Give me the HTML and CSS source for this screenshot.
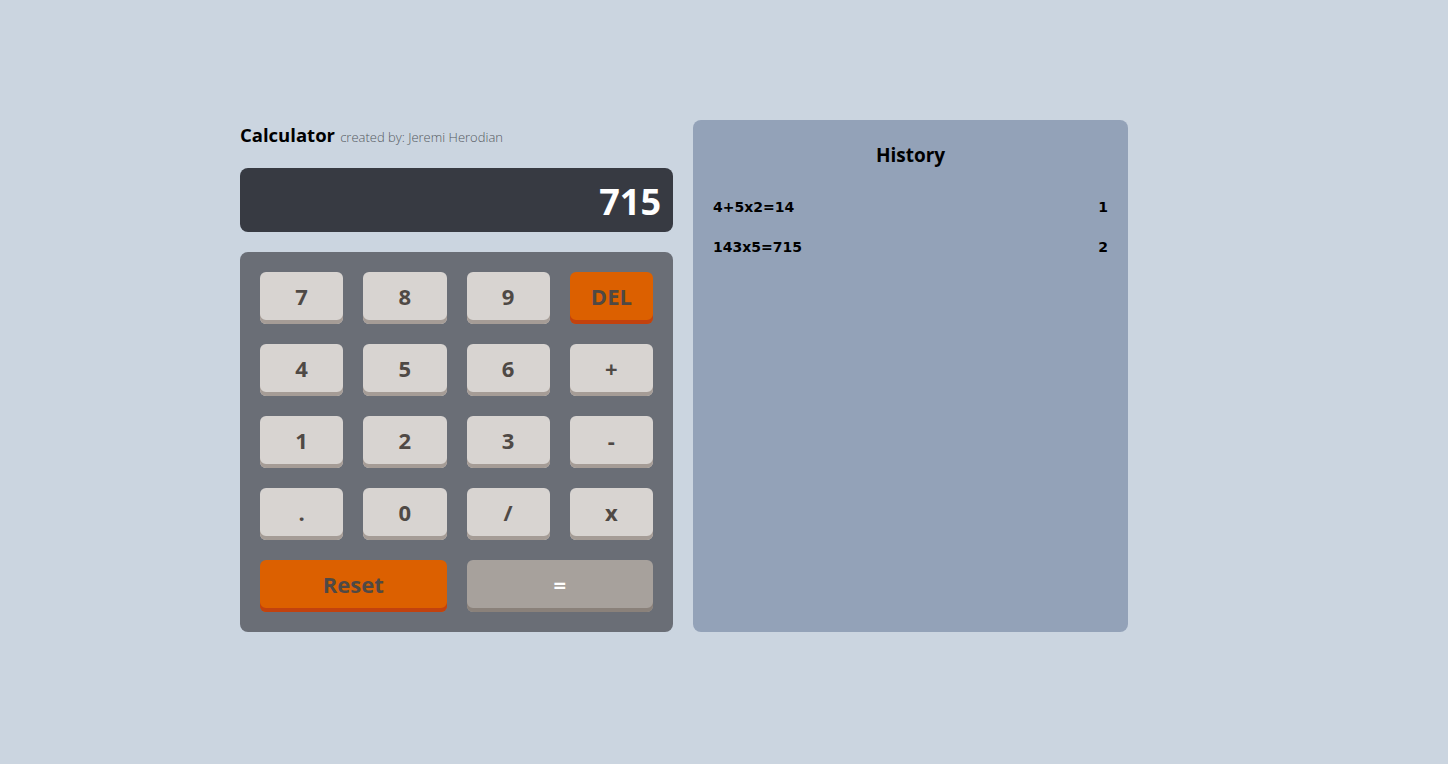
FILE: index.html
```html
<!DOCTYPE html>
<html lang="en">
<head>
<meta charset="utf-8">
<title>Calculator</title>
<link rel="stylesheet" href="styles.css">
</head>
<body>
<div class="app">
  <div class="calc">
    <div class="title"><span class="name">Calculator</span> <span class="by">created by: Jeremi Herodian</span></div>
    <div class="display">715</div>
    <div class="keypad">
      <button class="key">7</button>
      <button class="key">8</button>
      <button class="key">9</button>
      <button class="key orange">DEL</button>
      <button class="key">4</button>
      <button class="key">5</button>
      <button class="key">6</button>
      <button class="key">+</button>
      <button class="key">1</button>
      <button class="key">2</button>
      <button class="key">3</button>
      <button class="key">-</button>
      <button class="key">.</button>
      <button class="key">0</button>
      <button class="key">/</button>
      <button class="key">x</button>
      <button class="key orange wide">Reset</button>
      <button class="key equals wide">=</button>
    </div>
  </div>
  <div class="history">
    <h2 class="history-title">History</h2>
    <ul class="history-list">
      <li class="history-item"><span>4+5x2=14</span><span>1</span></li>
      <li class="history-item"><span>143x5=715</span><span>2</span></li>
    </ul>
  </div>
</div>
</body>
</html>
```
FILE: styles.css
```css
* { box-sizing: border-box; }
html, body { margin: 0; padding: 0; }
body {
  background: #cbd5e0;
  font-family: "Open Sans", "Noto Sans", sans-serif;
  width: 1448px;
  height: 764px;
  overflow: hidden;
}
.app {
  display: flex;
  gap: 20px;
  padding: 120px 0 0 240px;
}
.calc {
  width: 433px;
  display: flex;
  flex-direction: column;
}
.title {
  height: 48px;
  padding-top: 2px;
  line-height: 26px;
  color: #000;
}
.name {
  font-size: 18.5px;
  font-weight: 700;
}
.by {
  font-size: 13px;
  font-weight: 300;
  color: #555a60;
  margin-left: 1px;
}
.display {
  height: 64px;
  background: #373a42;
  border-radius: 8px;
  color: #fff;
  font-size: 36px;
  font-weight: 700;
  text-align: right;
  line-height: 68px;
  padding-right: 12px;
}
.keypad {
  margin-top: 20px;
  height: 380px;
  background: #6a6e76;
  border-radius: 8px;
  padding: 20px;
  display: grid;
  grid-template-columns: repeat(4, 1fr);
  grid-auto-rows: 52px;
  column-gap: 20px;
  row-gap: 20px;
}
.key {
  border: none;
  margin: 0;
  padding: 0 0 4px;
  height: 52px;
  border-radius: 6px;
  background: #d8d4d1;
  box-shadow: inset 0 -4px 0 #a59c96;
  color: #4f4945;
  font-family: "Open Sans", "Noto Sans", sans-serif;
  font-size: 22px;
  font-weight: 700;
  cursor: pointer;
}
.key.orange {
  background: #dc6000;
  box-shadow: inset 0 -4px 0 #c2420e;
}
.key.wide { grid-column: span 2; }
.key.equals {
  background: #a7a19c;
  box-shadow: inset 0 -4px 0 #8a817a;
  color: #fff;
}
.history {
  width: 435px;
  height: 512px;
  background: #93a2b8;
  border-radius: 8px;
  padding: 20px 20px;
}
.history-title {
  margin: 0;
  text-align: center;
  font-size: 19px;
  font-weight: 700;
  line-height: 30px;
  color: #000;
}
.history-list {
  list-style: none;
  margin: 29px 0 0;
  padding: 0;
}
.history-item {
  display: flex;
  justify-content: space-between;
  font-family: "DejaVu Sans", Verdana, sans-serif;
  font-size: 14px;
  font-weight: 700;
  line-height: 16px;
  height: 40px;
  color: #000;
}
```
